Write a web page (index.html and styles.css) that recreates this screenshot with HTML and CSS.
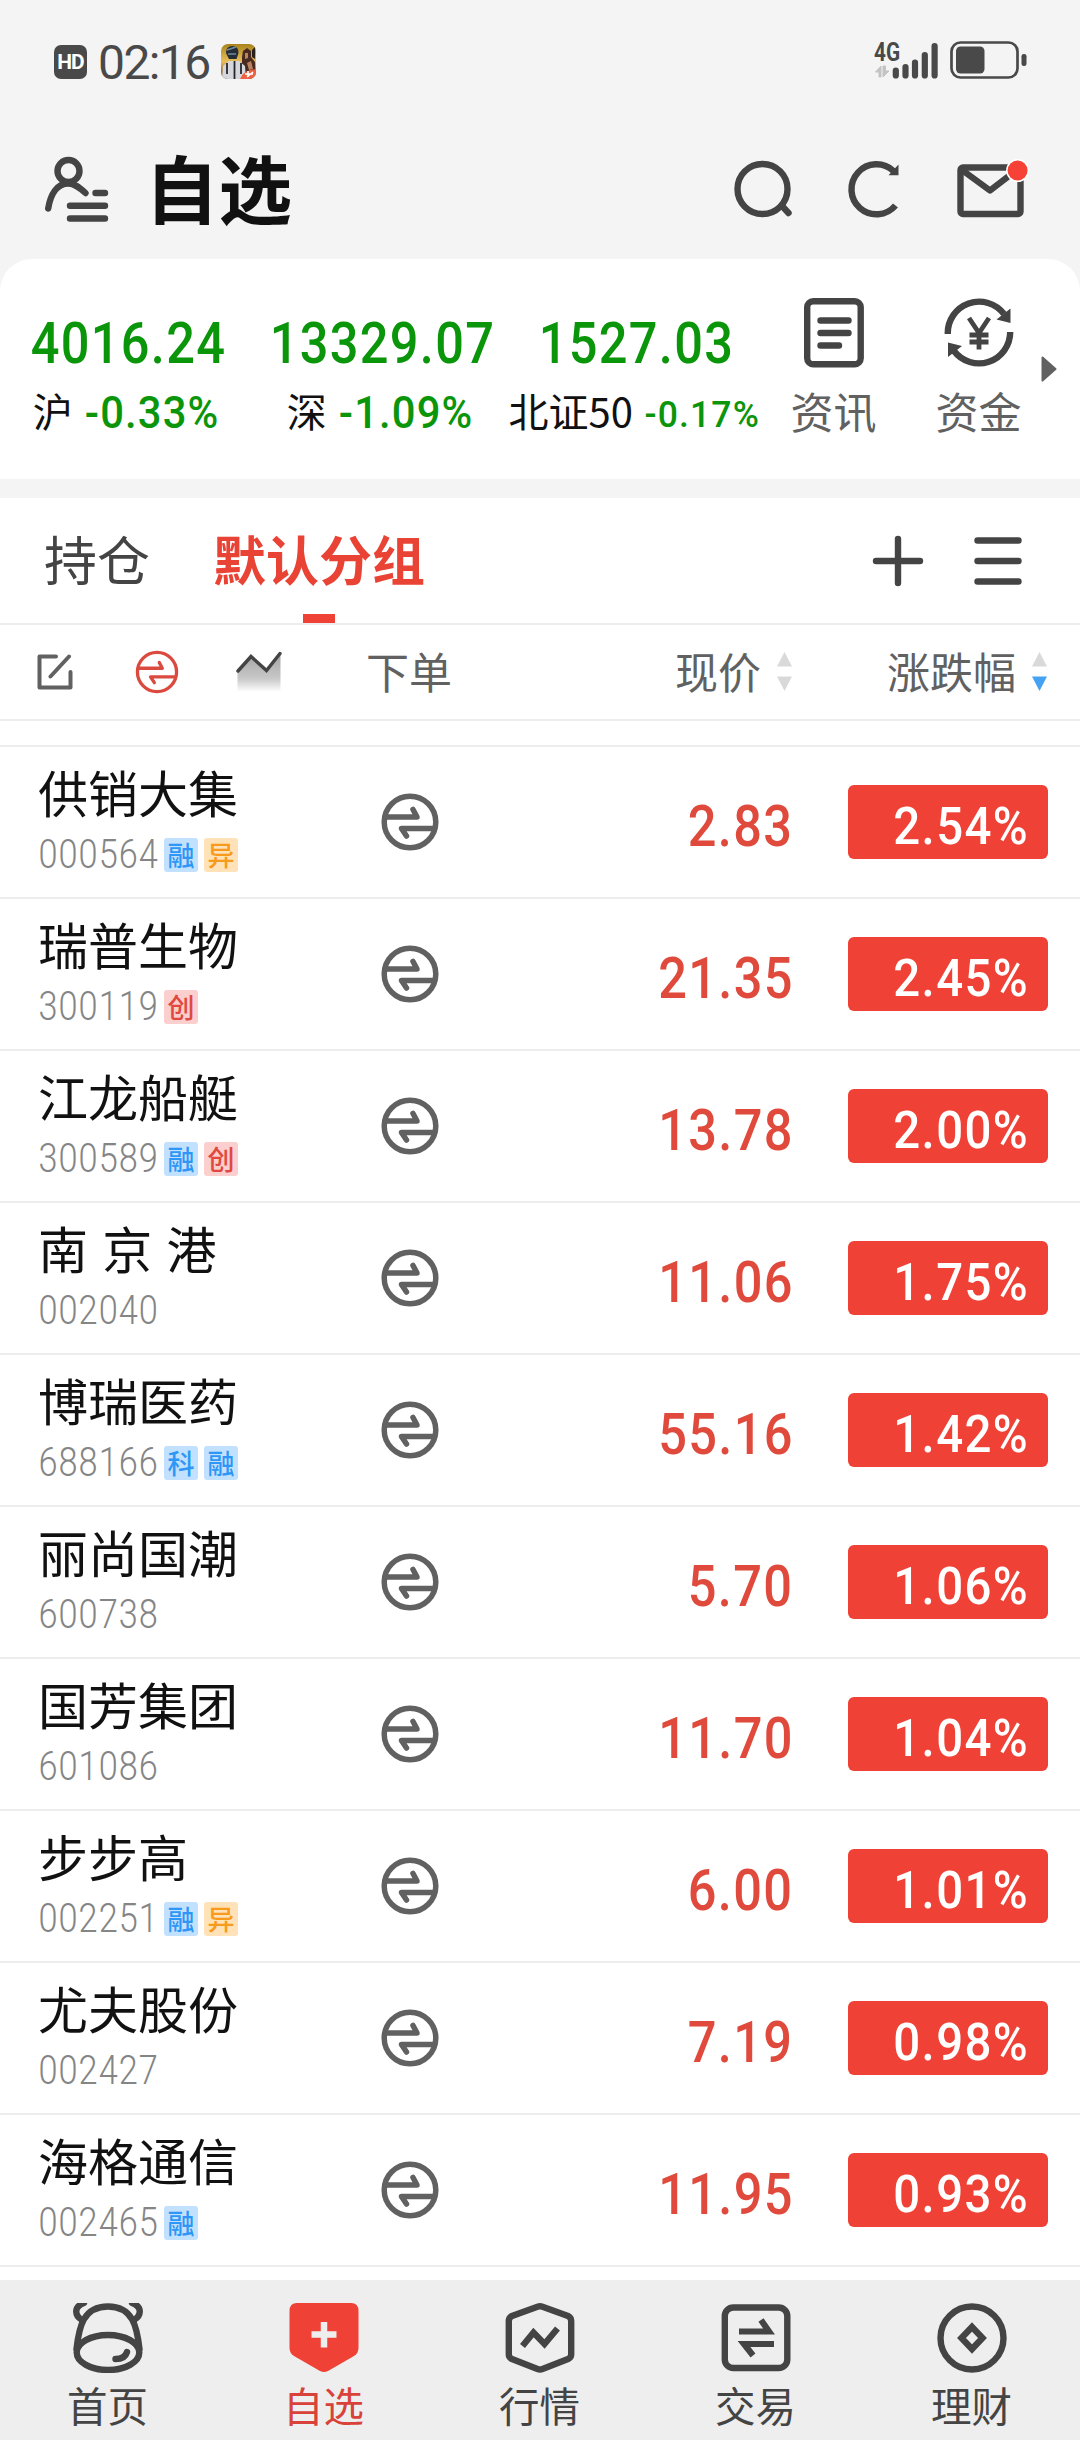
FILE: index.html
```
<!DOCTYPE html>
<html lang="zh-CN">
<head>
<meta charset="utf-8">
<title>自选</title>
<link rel="stylesheet" href="styles.css">
</head>
<body>
<svg class="defs" aria-hidden="true">
  <symbol id="swap" viewBox="0 0 58 58">
    <circle cx="29" cy="29" r="25.8"/>
    <path d="M5 24H36L32 16.500M53 35.500H20.500L25.500 43"/>
  </symbol>
</svg>
<div class="app">
  <header class="status">
    <span class="hd">HD</span>
    <span class="clock num">02:16</span>
    <svg class="game" viewBox="0 0 35 35">
      <defs>
        <clipPath id="gc"><rect width="35" height="35" rx="7"/></clipPath>
        <linearGradient id="gg" x1="0" y1="0" x2="0" y2="1"><stop offset="0" stop-color="#a8841c"/><stop offset=".5" stop-color="#e8bd5c"/><stop offset="1" stop-color="#5b4028"/></linearGradient>
      </defs>
      <g clip-path="url(#gc)">
        <rect width="35" height="35" fill="url(#gg)"/>
        <path d="M21 13l1-6 4-3 4 3v6l4 5v10l-9 2-4-9z" fill="#4a2a20"/>
        <path d="M24 9l3 0v5l-3 1zM26 19l4-2 2 8-4 1z" fill="#b98560"/>
        <path d="M31 6l3-3v12l-3-2z" fill="#2a211a"/>
        <path d="M1 35l1-13 6-5h10l6 5 1 13z" fill="#d5d7dc"/>
        <path d="M6 19v11M20 19v11M13.500 17v18" stroke="#24262c" stroke-width="1.800" fill="none"/>
        <path d="M5 9q0-7 6.500-7 6 0 6 7l-2 6H8z" fill="#252c35"/>
        <path d="M6 6l9-3M7 10h8" stroke="#6d8ba0" stroke-width="1.600"/>
        <path d="M19 35q3-9 16-10v10z" fill="#ee6243"/>
        <path d="M27 27v6M24 30h8M26 33l6-5" stroke="#fff" stroke-width="1.600"/>
      </g>
    </svg>
    <div class="radio">
      <svg class="signal" viewBox="0 0 66 38">
        <path d="M7 36V25L1.500 31H5V36ZM9 25V36L15 30H11.500V25Z" fill="#c4c4c4" stroke="#c4c4c4"/>
        <path d="M21.800 29.500V34.500M31.500 26V34.500M41 21.500V34.500M50.800 14V34.500M60.600 5V34.500" stroke="#494949" stroke-width="6.200" stroke-linecap="round"/>
      </svg>
      <span class="net">4G</span>
    </div>
    <svg class="battery" viewBox="0 0 78 38">
      <rect x="1.500" y="1.500" width="66" height="35" rx="9" fill="none" stroke="#494949" stroke-width="2.700"/>
      <rect x="6" y="5.500" width="28.500" height="27" rx="4.500" fill="#494949"/>
      <rect x="71.500" y="13" width="5" height="12" rx="2.200" fill="#494949"/>
    </svg>
  </header>

  <div class="titlebar">
    <svg class="user ic" viewBox="0 0 64 66">
      <circle cx="23.500" cy="15" r="11"/>
      <path d="M3.200 52.500C5.500 38 12 27.500 23.500 27.500c6 0 10.500 3.500 17 9.500M50.500 37H60M25 49.700H60M25 62.500H60"/>
    </svg>
    <h1>自选</h1>
    <svg class="tool ic" viewBox="0 0 60 60"><circle cx="29.500" cy="30" r="25"/><path d="M50 48L55.500 54"/></svg>
    <svg class="refresh tool ic butt" viewBox="0 0 60 60"><path d="M48.500 46.500A25 25 0 1 1 46.500 12"/><path d="M51.500 5.500V16.300H41.500Z" fill="#444" stroke="none"/></svg>
    <svg class="mail ic" viewBox="0 0 72 60">
      <rect x="3.500" y="8.500" width="60" height="46.500" rx="2.500"/><path d="M5 11L33 31.500L61 10"/>
      <circle cx="60.600" cy="11.500" r="11.500" fill="#fff" stroke="none"/><circle cx="60.600" cy="11.500" r="10" fill="#f54136" stroke="none"/>
    </svg>
  </div>

  <section class="market">
    <div class="index"><b class="num">4016.24</b><p><span>沪</span><i class="num">-0.33%</i></p></div>
    <div class="index"><b class="num">13329.07</b><p><span>深</span><i class="num">-1.09%</i></p></div>
    <div class="index"><b class="num">1527.03</b><p><span>北证50</span><i class="num small">-0.17%</i></p></div>
    <div class="entry">
      <svg class="ic" viewBox="0 0 72 72"><rect x="9.200" y="4.200" width="53.500" height="63" rx="6"/><path d="M22.500 23.500H50.500M22.500 36H50.500M22.500 48.500H41"/></svg>
      <span>资讯</span>
    </div>
    <div class="entry">
      <svg class="ic butt" viewBox="0 0 72 72">
        <path d="M4.800 37A31.300 31.300 0 0 1 61 17M67.200 35A31.300 31.300 0 0 1 11 54"/>
        <path d="M67.500 11.500V26L53.500 22.500ZM5 45.500V60L19 49Z" fill="#444" stroke="none"/>
        <path d="M26 21L36 36L46 21M36 35V52.500M26.500 38H45.500M26.500 45H45.500" stroke-width="4.800"/>
      </svg>
      <span>资金</span>
    </div>
    <svg class="more" viewBox="0 0 16 26"><path d="M1.500 1.500L14.500 13L1.500 24.500Z" fill="#616161" stroke="#616161" stroke-width="2" stroke-linejoin="round"/></svg>
  </section>

  <nav class="tabs">
    <span class="tab">持仓</span>
    <span class="tab active">默认分组</span>
    <svg class="ic add" viewBox="0 0 52 52"><path d="M4 26H48M26 4V48"/></svg>
    <svg class="ic" viewBox="0 0 52 52"><path d="M5.500 5.500H46.500M5.500 26H46.500M5.500 46.500H46.500"/></svg>
  </nav>

  <div class="columns">
    <svg class="edit" viewBox="0 0 36 36"><path d="M19 2.500H2.500V33.500H33.500V18M32 2.500L13.500 22.500"/></svg>
    <svg class="swap red"><use href="#swap"/></svg>
    <svg class="trend" viewBox="0 0 46 42">
      <defs><linearGradient id="tg" x1="0" y1="0" x2="0" y2="1"><stop offset="0" stop-color="#a3a3a3"/><stop offset=".65" stop-color="#c9c9c9"/><stop offset="1" stop-color="#fff"/></linearGradient></defs>
      <path d="M1.500 21L15 5.500L30.500 20L44.500 3V41H1.500Z" fill="url(#tg)"/>
      <path d="M2 20L15 5.500L30.500 19.500L44 2.500" fill="none" stroke="#444" stroke-width="3.400" stroke-linecap="round"/>
    </svg>
    <span class="label order">下单</span>
    <div class="col price-col"><span class="label">现价</span><svg class="sort" viewBox="0 0 15 40"><path d="M0 14.500L7.500 0L15 14.500Z" fill="#d9d9d9"/><path d="M0 24.500L7.500 39L15 24.500Z" fill="#d9d9d9"/></svg></div>
    <div class="col change-col"><span class="label">涨跌幅</span><svg class="sort" viewBox="0 0 15 40"><path d="M0 14.500L7.500 0L15 14.500Z" fill="#d9d9d9"/><path d="M0 24.500L7.500 39L15 24.500Z" fill="#45a2f2"/></svg></div>
  </div>

  <main class="list">
    <div class="row"><div class="stock"><h2>供销大集</h2><p><span class="num code">000564</span><em class="rong">融</em><em class="yi">异</em></p></div><svg class="swap"><use href="#swap"/></svg><span class="num price">2.83</span><div class="num pct"><span>2.54%</span></div></div>
    <div class="row"><div class="stock"><h2>瑞普生物</h2><p><span class="num code">300119</span><em class="chuang">创</em></p></div><svg class="swap"><use href="#swap"/></svg><span class="num price">21.35</span><div class="num pct"><span>2.45%</span></div></div>
    <div class="row"><div class="stock"><h2>江龙船艇</h2><p><span class="num code">300589</span><em class="rong">融</em><em class="chuang">创</em></p></div><svg class="swap"><use href="#swap"/></svg><span class="num price">13.78</span><div class="num pct"><span>2.00%</span></div></div>
    <div class="row"><div class="stock"><h2>南 京 港</h2><p><span class="num code">002040</span></p></div><svg class="swap"><use href="#swap"/></svg><span class="num price">11.06</span><div class="num pct"><span>1.75%</span></div></div>
    <div class="row"><div class="stock"><h2>博瑞医药</h2><p><span class="num code">688166</span><em class="rong">科</em><em class="rong">融</em></p></div><svg class="swap"><use href="#swap"/></svg><span class="num price">55.16</span><div class="num pct"><span>1.42%</span></div></div>
    <div class="row"><div class="stock"><h2>丽尚国潮</h2><p><span class="num code">600738</span></p></div><svg class="swap"><use href="#swap"/></svg><span class="num price">5.70</span><div class="num pct"><span>1.06%</span></div></div>
    <div class="row"><div class="stock"><h2>国芳集团</h2><p><span class="num code">601086</span></p></div><svg class="swap"><use href="#swap"/></svg><span class="num price">11.70</span><div class="num pct"><span>1.04%</span></div></div>
    <div class="row"><div class="stock"><h2>步步高</h2><p><span class="num code">002251</span><em class="rong">融</em><em class="yi">异</em></p></div><svg class="swap"><use href="#swap"/></svg><span class="num price">6.00</span><div class="num pct"><span>1.01%</span></div></div>
    <div class="row"><div class="stock"><h2>尤夫股份</h2><p><span class="num code">002427</span></p></div><svg class="swap"><use href="#swap"/></svg><span class="num price">7.19</span><div class="num pct"><span>0.98%</span></div></div>
    <div class="row"><div class="stock"><h2>海格通信</h2><p><span class="num code">002465</span><em class="rong">融</em></p></div><svg class="swap"><use href="#swap"/></svg><span class="num price">11.95</span><div class="num pct"><span>0.93%</span></div></div>
  </main>

  <footer class="nav">
    <a>
      <svg class="ic" viewBox="0 0 70 70"><path d="M11 0C0 4 2 13 9 17M59 0C70 4 68 13 61 17"/><path d="M3.500 46C6 24 10 3.500 35 3.500S64 24 66.500 46"/><ellipse cx="35" cy="49.500" rx="31.300" ry="17.500"/><path d="M42.500 56Q52 56 54 49"/></svg>
      <span>首页</span>
    </a>
    <a class="on">
      <svg viewBox="0 0 70 70"><path d="M8 0H62Q69.500 0 69.500 8V45Q69.500 50 65 53L39 68Q35 70 31 68L5 53Q.5 50 .5 45V8Q.5 0 8 0Z" fill="#ef4135"/><path d="M35 19V44.500M22.500 31.500H47.500" stroke="#eee" stroke-width="6.500"/></svg>
      <span>自选</span>
    </a>
    <a>
      <svg class="ic butt" viewBox="0 0 70 70"><path d="M32.500 3.700Q35 2.800 37.500 3.700L63 13Q66.200 14.500 66.200 18V51.500Q66.200 54.500 63 56L37.500 66Q35 67 32.500 66L7 56Q3.800 54.500 3.800 51.500V18Q3.800 14.500 7 13Z"/><path d="M17.500 43L28.500 29.500L39.500 41L52.500 25.500"/></svg>
      <span>行情</span>
    </a>
    <a>
      <svg class="ic butt" viewBox="0 0 70 70"><rect x="3.800" y="4.500" width="62.500" height="60.500" rx="8.500"/><path d="M18 28.500H48L40 17M53 41H23L32 52.500" stroke-width="6.200"/></svg>
      <span>交易</span>
    </a>
    <a>
      <svg class="ic" viewBox="0 0 70 70"><circle cx="35" cy="35" r="31.500"/><path class="miter" d="M35 24L45.500 35L35 46L24.500 35Z"/></svg>
      <span>理财</span>
    </a>
  </footer>
</div>
</body>
</html>
```
FILE: styles.css
```
* { box-sizing: border-box; margin: 0; padding: 0; }
body { width: 1080px; background: #f4f4f4; font-family: "Noto Sans CJK SC", sans-serif; color: #444; }
svg { display: block; flex: none; }
.defs { position: absolute; width: 0; height: 0; }
.app { width: 1080px; height: 2440px; display: flex; flex-direction: column; overflow: hidden; }
.num { font-family: Roboto, sans-serif; }
.ic { fill: none; stroke: #444; stroke-width: 6.4; stroke-linecap: round; stroke-linejoin: round; }
.ic.butt { stroke-linecap: butt; stroke-linejoin: miter; }
.ic .miter { stroke-linejoin: miter; }

.status { height: 120px; padding: 0 52px 0 54px; display: flex; align-items: center; flex: none; }
.hd { width: 33px; height: 34px; margin-top: 4px; border-radius: 7px; background: #494949; color: #fff; font: 700 21px/34px Roboto, sans-serif; letter-spacing: -1px; text-align: center; }
.clock { width: 125px; padding-left: 11px; font-size: 48px; line-height: 56px; letter-spacing: -1.6px; color: #494949; margin-top: 5px; }
.game { width: 35px; height: 35px; margin-left: 9px; margin-top: 3px; }
.radio { position: relative; margin-left: auto; width: 66px; height: 38px; }
.signal { width: 66px; height: 38px; }
.net { position: absolute; left: 0; top: 0; font: 700 25px/24px Roboto, sans-serif; color: #494949; transform: scaleX(.83); transform-origin: left; }
.battery { width: 78px; height: 38px; margin-left: 10px; }

.titlebar { height: 139px; padding: 0 51px 8px 45px; display: flex; align-items: center; flex: none; }
.titlebar svg { position: relative; top: 3px; }
.user { width: 64px; height: 66px; }
h1 { margin-left: 36px; font-size: 73.5px; line-height: 100px; font-weight: 700; color: #111; margin-right: auto; }
.tool { width: 60px; height: 60px; margin-right: 54px; }
.tool.refresh { margin-right: 50px; }
.mail { width: 72px; height: 60px; }

.market { height: 220px; flex: none; background: #fff; border-radius: 32px 32px 0 0; margin-bottom: 19px; display: flex; }
.index { height: 220px; padding-top: 52px; color: #0a950a; text-align: center; width: 254px; flex: none; }
.index b { display: block; font-size: 56.5px; line-height: 66px; font-weight: 500; letter-spacing: 1.4px; transform: translateX(1.5px) scaleX(.895); }
.index p { display: flex; justify-content: center; align-items: center; gap: 8px; height: 60px; margin-top: 3px; }
.index span { font-size: 40px; line-height: 56px; color: #111; }
.index i { font-style: normal; font-weight: 500; font-size: 43.5px; letter-spacing: 1.2px; padding-top: 7px; transform: translateX(1px) scaleX(.96); }
.index i.small { font-size: 37px; padding-top: 9px; }
.entry { width: 145px; padding-top: 38px; display: flex; flex-direction: column; align-items: center; position: relative; left: -1px; }
.entry svg { width: 72px; height: 72px; }
.entry span { font-size: 43px; line-height: 60px; margin-top: 11px; color: #616161; }
.more { width: 16px; height: 26px; margin: 97px 0 0 -11px; }

.tabs { height: 127px; flex: none; background: #fff; border-bottom: 2px solid #ededed; padding: 0 56px 0 44px; display: flex; align-items: center; }
.tab { position: relative; font-size: 53px; height: 125px; line-height: 121px; margin-right: 63px; }
.tab.active { font-weight: 700; color: #e94335; margin-right: auto; }
.tab.active::after { content: ""; position: absolute; left: 90px; bottom: 0; width: 32px; height: 9px; background: #ef4135; }
.tabs svg { width: 52px; height: 52px; }
.tabs .add { margin-right: 48px; }

.columns { height: 96px; flex: none; background: #fff; border-bottom: 2px solid #ededed; padding: 0 33px 0 37px; display: flex; align-items: center; font-size: 43px; line-height: 60px; color: #616161; }
.edit { width: 36px; height: 36px; fill: none; stroke: #616161; stroke-width: 4; stroke-linecap: round; stroke-linejoin: round; }
.swap { width: 58px; height: 58px; fill: none; stroke: #616161; stroke-width: 5.5; stroke-linecap: round; stroke-linejoin: round; }
.swap.red { width: 44px; height: 44px; stroke: #db4a3f; stroke-width: 4.4; margin-left: 62px; }
.trend { width: 46px; height: 42px; margin-left: 57px; }
.label { padding-bottom: 5px; }
.order { margin-left: 84px; }
.col { display: flex; align-items: center; gap: 16px; }
.price-col { margin-left: auto; }
.change-col { margin-left: 95px; }
.sort { width: 15px; height: 40px; }

.list { flex: 1; background: #fff; padding-top: 24px; }
.row { height: 152px; border-top: 2px solid #ededed; display: flex; align-items: center; padding: 0 32px 0 38px; }
.row:last-child { height: 154px; border-bottom: 2px solid #ededed; }
.stock { width: 343px; flex: none; height: 150px; padding-top: 11px; }
h2 { font-size: 50px; line-height: 66px; font-weight: 400; color: #111; white-space: nowrap; word-spacing: 3px; }
.stock p { display: flex; align-items: center; height: 36px; margin-top: 12px; }
.code { width: 126px; font-size: 40px; font-weight: 300; color: #858585; letter-spacing: 1.2px; transform: translateX(.5px) scaleX(.857); transform-origin: left; }
em { font-style: normal; font-size: 27px; line-height: 34px; width: 34px; height: 34px; margin-right: 6px; border-radius: 3px; text-align: center; margin-top: 2px; font-weight: 500; }
.rong { background: #c1e1ff; color: #2e96f5; }
.yi { background: #ffe2b8; color: #f89b1c; }
.chuang { background: #fbcfcd; color: #e04840; }
.price { margin-left: auto; font-size: 56.5px; font-weight: 500; color: #e04a3d; letter-spacing: 1.4px; padding-top: 9px; transform: translateX(1.5px) scaleX(.895); transform-origin: right; }
.pct { margin-left: 56px; width: 200px; height: 74px; background: #ef4135; border-radius: 6px; color: #fff; font-size: 51px; line-height: 83px; font-weight: 500; text-align: right; padding-right: 19px; }
.pct span { display: inline-block; letter-spacing: 1.5px; transform: scaleX(.93); transform-origin: right; }

.nav { height: 160px; flex: none; background: #eee; display: flex; padding-top: 23px; }
.nav a { flex: 1; display: flex; flex-direction: column; align-items: center; position: relative; left: -.5px; }
.nav svg { width: 70px; height: 70px; }
.nav span { font-size: 40.5px; line-height: 56px; margin-top: 4px; }
.on { color: #d8423a; }
```
